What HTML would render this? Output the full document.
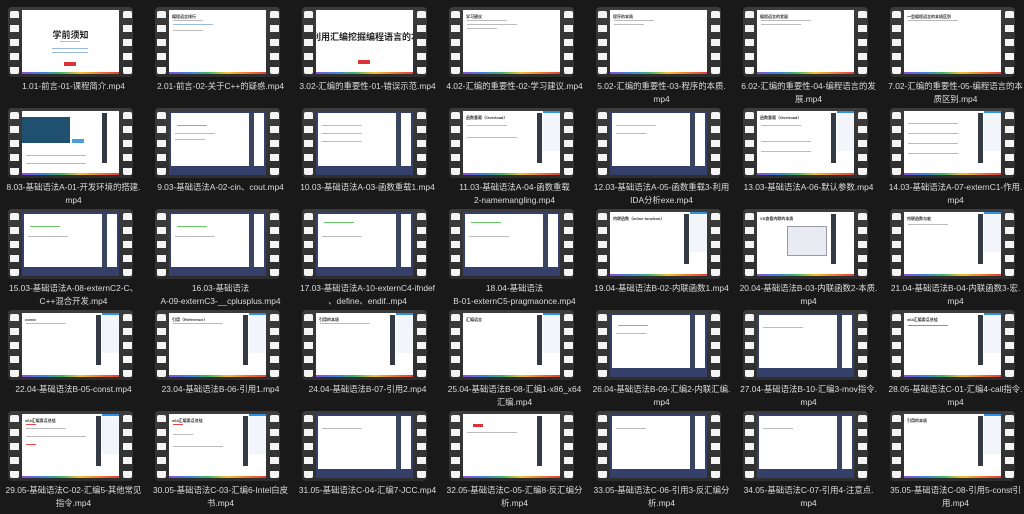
<!DOCTYPE html>
<html><head><meta charset="utf-8"><style>
*{margin:0;padding:0;box-sizing:border-box}
body{width:1024px;height:514px;background:#191919;overflow:hidden;position:relative;font-family:"Liberation Sans","Noto Sans CJK SC",sans-serif}
.c{position:absolute;width:147px;height:101px}
.f{position:absolute;left:8px;top:7px;width:125px;height:70px;border-radius:4px;background:linear-gradient(#3c3c3c,#2e2e2e)}
.h{position:absolute;top:4px;width:9px;height:63px;background:repeating-linear-gradient(#f4f4f4 0 7px,transparent 7px 14px);border-radius:2px}
.h.l{left:2px}.h.r{left:115px}
.s{position:absolute;left:14px;top:3px;width:97px;height:64px;background:#fff;overflow:hidden}
.s:after{content:"";position:absolute;left:0;right:0;bottom:0;height:2px;background:linear-gradient(90deg,#8a4fd8,#3f7fe0,#3cb46e,#f0c030,#f07a30,#e04040)}
.sb{position:absolute;left:76%;top:2px;width:5px;height:50px;background:#333a44}
.sp{position:absolute;left:82%;top:0;right:0;height:40px;background:#f2f6fa;border-top:2px solid #2f8fe0}
.vs{background:#fff;border:2px solid #34406a;border-bottom-width:9px}
.vs .sb{left:84%;background:#3a4560;height:60px;top:0}
.vs:after{display:none}
.t{position:absolute;left:3px;top:4px;font-size:4px;color:#333;font-weight:bold}
.ln{position:absolute;left:4px;height:1px;background:#bbb}
.g{position:absolute;left:6px;height:1px;background:#6c6}
.lb{position:absolute;left:-20px;top:80px;width:187px;text-align:center;font-size:8.4px;line-height:13px;color:#dcdcdc;white-space:nowrap}
</style></head><body>
<!-- Row 1 -->
<div class="c" style="left:0;top:0"><div class="f"><div class="h l"></div><div class="h r"></div><div class="s"><div style="position:absolute;top:18px;width:100%;text-align:center;font-size:9px;font-weight:bold;color:#222">学前须知</div><div class="ln" style="left:38px;top:31px;width:20px"></div><div class="ln" style="left:30px;top:38px;width:36px;background:#9bd"></div><div class="ln" style="left:30px;top:42px;width:36px;background:#9bd"></div><div style="position:absolute;left:42px;top:52px;width:12px;height:4px;background:#d33"></div></div></div><div class="lb">1.01-前言-01-课程简介.mp4</div></div>
<div class="c" style="left:147px;top:0"><div class="f"><div class="h l"></div><div class="h r"></div><div class="s"><div class="t">编程语言排行</div><div class="ln" style="top:10px;width:30px"></div><div class="ln" style="top:14px;width:40px;background:#9bd"></div><div class="ln" style="top:20px;width:30px"></div></div></div><div class="lb">2.01-前言-02-关于C++的疑惑.mp4</div></div>
<div class="c" style="left:294px;top:0"><div class="f"><div class="h l"></div><div class="h r"></div><div class="s"><div style="position:absolute;top:20px;left:-4px;width:110px;text-align:center;font-size:9px;font-weight:bold;color:#222;white-space:nowrap">利用汇编挖掘编程语言的本质</div><div style="position:absolute;left:42px;top:50px;width:12px;height:4px;background:#d33"></div></div></div><div class="lb">3.02-汇编的重要性-01-错误示范.mp4</div></div>
<div class="c" style="left:441px;top:0"><div class="f"><div class="h l"></div><div class="h r"></div><div class="s"><div class="t">学习建议</div><div class="ln" style="top:10px;width:40px"></div><div class="ln" style="top:14px;width:50px"></div><div class="ln" style="top:18px;width:30px"></div></div></div><div class="lb">4.02-汇编的重要性-02-学习建议.mp4</div></div>
<div class="c" style="left:588px;top:0"><div class="f"><div class="h l"></div><div class="h r"></div><div class="s"><div class="t">程序的本质</div><div class="ln" style="top:10px;width:40px"></div><div class="ln" style="top:14px;width:30px"></div></div></div><div class="lb">5.02-汇编的重要性-03-程序的本质.<br>mp4</div></div>
<div class="c" style="left:735px;top:0"><div class="f"><div class="h l"></div><div class="h r"></div><div class="s"><div class="t">编程语言的发展</div><div class="ln" style="top:10px;width:50px"></div><div class="ln" style="top:14px;width:40px"></div></div></div><div class="lb">6.02-汇编的重要性-04-编程语言的发<br>展.mp4</div></div>
<div class="c" style="left:882px;top:0"><div class="f"><div class="h l"></div><div class="h r"></div><div class="s"><div class="t">一些编程语言的本质区别</div><div class="ln" style="top:10px;width:50px"></div></div></div><div class="lb">7.02-汇编的重要性-05-编程语言的本<br>质区别.mp4</div></div>
<!-- Row 2 -->
<div class="c" style="left:0;top:101px"><div class="f"><div class="h l"></div><div class="h r"></div><div class="s"><div style="position:absolute;left:0;top:6px;width:48px;height:26px;background:#1f5070"></div><div style="position:absolute;left:50px;top:28px;width:12px;height:4px;background:#4a9ee0"></div><div class="sb" style="left:82%"></div><div class="ln" style="top:44px;width:60px"></div><div class="ln" style="top:52px;width:60px"></div></div></div><div class="lb">8.03-基础语法A-01-开发环境的搭建.<br>mp4</div></div>
<div class="c" style="left:147px;top:101px"><div class="f"><div class="h l"></div><div class="h r"></div><div class="s vs"><div class="sb"></div><div class="g" style="top:12px;width:30px"></div><div class="ln" style="top:20px;width:40px"></div><div class="ln" style="top:26px;width:30px"></div></div></div><div class="lb">9.03-基础语法A-02-cin、cout.mp4</div></div>
<div class="c" style="left:294px;top:101px"><div class="f"><div class="h l"></div><div class="h r"></div><div class="s vs"><div class="sb"></div><div class="ln" style="top:12px;width:40px"></div><div class="ln" style="top:20px;width:40px"></div><div class="ln" style="top:28px;width:40px"></div></div></div><div class="lb">10.03-基础语法A-03-函数重载1.mp4</div></div>
<div class="c" style="left:441px;top:101px"><div class="f"><div class="h l"></div><div class="h r"></div><div class="s"><div class="t">函数重载（Overload）</div><div class="sb"></div><div class="sp"></div><div class="ln" style="top:14px;width:40px"></div><div class="ln" style="top:26px;width:50px"></div></div></div><div class="lb">11.03-基础语法A-04-函数重载<br>2-namemangling.mp4</div></div>
<div class="c" style="left:588px;top:101px"><div class="f"><div class="h l"></div><div class="h r"></div><div class="s vs"><div class="sb"></div><div class="ln" style="top:12px;width:40px"></div><div class="ln" style="top:20px;width:30px"></div></div></div><div class="lb">12.03-基础语法A-05-函数重载3-利用<br>IDA分析exe.mp4</div></div>
<div class="c" style="left:735px;top:101px"><div class="f"><div class="h l"></div><div class="h r"></div><div class="s"><div class="t">函数重载（Overload）</div><div class="sb"></div><div class="sp"></div><div class="ln" style="top:14px;width:40px"></div><div class="ln" style="top:30px;width:50px"></div><div class="ln" style="top:40px;width:50px"></div></div></div><div class="lb">13.03-基础语法A-06-默认参数.mp4</div></div>
<div class="c" style="left:882px;top:101px"><div class="f"><div class="h l"></div><div class="h r"></div><div class="s"><div class="sb"></div><div class="sp"></div><div class="ln" style="top:12px;width:50px"></div><div class="ln" style="top:22px;width:50px"></div><div class="ln" style="top:32px;width:50px"></div><div class="ln" style="top:42px;width:50px"></div></div></div><div class="lb">14.03-基础语法A-07-externC1-作用.<br>mp4</div></div>
<!-- Row 3 -->
<div class="c" style="left:0;top:202px"><div class="f"><div class="h l"></div><div class="h r"></div><div class="s vs"><div class="sb"></div><div class="g" style="top:12px;width:30px"></div><div class="ln" style="top:22px;width:40px"></div></div></div><div class="lb">15.03-基础语法A-08-externC2-C、<br>C++混合开发.mp4</div></div>
<div class="c" style="left:147px;top:202px"><div class="f"><div class="h l"></div><div class="h r"></div><div class="s vs"><div class="sb"></div><div class="g" style="top:12px;width:30px"></div><div class="ln" style="top:22px;width:40px"></div></div></div><div class="lb">16.03-基础语法<br>A-09-externC3-__cplusplus.mp4</div></div>
<div class="c" style="left:294px;top:202px"><div class="f"><div class="h l"></div><div class="h r"></div><div class="s vs"><div class="sb"></div><div class="g" style="top:8px;width:30px"></div><div class="ln" style="top:22px;width:40px"></div></div></div><div class="lb">17.03-基础语法A-10-externC4-ifndef<br>、define、endif..mp4</div></div>
<div class="c" style="left:441px;top:202px"><div class="f"><div class="h l"></div><div class="h r"></div><div class="s vs"><div class="sb"></div><div class="g" style="top:8px;width:30px"></div><div class="ln" style="top:22px;width:40px"></div></div></div><div class="lb">18.04-基础语法<br>B-01-externC5-pragmaonce.mp4</div></div>
<div class="c" style="left:588px;top:202px"><div class="f"><div class="h l"></div><div class="h r"></div><div class="s"><div class="t">内联函数（inline function）</div><div class="sb"></div><div class="sp"></div></div></div><div class="lb">19.04-基础语法B-02-内联函数1.mp4</div></div>
<div class="c" style="left:735px;top:202px"><div class="f"><div class="h l"></div><div class="h r"></div><div class="s"><div class="t">VS查看内联的本质</div><div style="position:absolute;left:30px;top:14px;width:40px;height:30px;background:#e8ecf2;border:1px solid #99a"></div><div class="sb"></div></div></div><div class="lb">20.04-基础语法B-03-内联函数2-本质.<br>mp4</div></div>
<div class="c" style="left:882px;top:202px"><div class="f"><div class="h l"></div><div class="h r"></div><div class="s"><div class="t">内联函数与宏</div><div class="sb"></div><div class="sp"></div><div class="ln" style="top:12px;width:40px"></div></div></div><div class="lb">21.04-基础语法B-04-内联函数3-宏.<br>mp4</div></div>
<!-- Row 4 -->
<div class="c" style="left:0;top:303px"><div class="f"><div class="h l"></div><div class="h r"></div><div class="s"><div class="t">const</div><div class="sb"></div><div class="sp"></div><div class="ln" style="top:10px;width:40px"></div></div></div><div class="lb">22.04-基础语法B-05-const.mp4</div></div>
<div class="c" style="left:147px;top:303px"><div class="f"><div class="h l"></div><div class="h r"></div><div class="s"><div class="t">引用（Reference）</div><div class="sb"></div><div class="sp"></div><div class="ln" style="top:10px;width:50px"></div></div></div><div class="lb">23.04-基础语法B-06-引用1.mp4</div></div>
<div class="c" style="left:294px;top:303px"><div class="f"><div class="h l"></div><div class="h r"></div><div class="s"><div class="t">引用的本质</div><div class="sb"></div><div class="sp"></div><div class="ln" style="top:10px;width:50px"></div></div></div><div class="lb">24.04-基础语法B-07-引用2.mp4</div></div>
<div class="c" style="left:441px;top:303px"><div class="f"><div class="h l"></div><div class="h r"></div><div class="s"><div class="t">汇编语言</div><div class="sb"></div><div class="sp"></div></div></div><div class="lb">25.04-基础语法B-08-汇编1-x86_x64<br>汇编.mp4</div></div>
<div class="c" style="left:588px;top:303px"><div class="f"><div class="h l"></div><div class="h r"></div><div class="s vs"><div class="sb"></div><div class="g" style="top:10px;width:30px"></div><div class="ln" style="top:18px;width:30px"></div></div></div><div class="lb">26.04-基础语法B-09-汇编2-内联汇编.<br>mp4</div></div>
<div class="c" style="left:735px;top:303px"><div class="f"><div class="h l"></div><div class="h r"></div><div class="s vs"><div class="sb"></div><div class="ln" style="top:12px;width:40px"></div></div></div><div class="lb">27.04-基础语法B-10-汇编3-mov指令.<br>mp4</div></div>
<div class="c" style="left:882px;top:303px"><div class="f"><div class="h l"></div><div class="h r"></div><div class="s"><div class="t">x64汇编要点总结</div><div class="sb"></div><div class="sp"></div><div class="ln" style="top:12px;width:40px;background:#e66"></div></div></div><div class="lb">28.05-基础语法C-01-汇编4-call指令.<br>mp4</div></div>
<!-- Row 5 -->
<div class="c" style="left:0;top:404px"><div class="f"><div class="h l"></div><div class="h r"></div><div class="s"><div class="t">x64汇编要点总结</div><div class="sb"></div><div class="sp"></div><div class="ln" style="top:10px;width:10px;background:#e44"></div><div class="ln" style="top:14px;width:40px"></div><div class="ln" style="top:22px;width:60px"></div><div class="ln" style="top:30px;width:10px;background:#e44"></div></div></div><div class="lb">29.05-基础语法C-02-汇编5-其他常见<br>指令.mp4</div></div>
<div class="c" style="left:147px;top:404px"><div class="f"><div class="h l"></div><div class="h r"></div><div class="s"><div class="t">x64汇编要点总结</div><div class="sb"></div><div class="sp"></div><div class="ln" style="top:10px;width:10px;background:#e44"></div><div class="ln" style="top:20px;width:20px"></div><div class="ln" style="top:32px;width:50px"></div></div></div><div class="lb">30.05-基础语法C-03-汇编6-Intel白皮<br>书.mp4</div></div>
<div class="c" style="left:294px;top:404px"><div class="f"><div class="h l"></div><div class="h r"></div><div class="s vs"><div class="sb"></div><div class="ln" style="top:12px;width:40px"></div></div></div><div class="lb">31.05-基础语法C-04-汇编7-JCC.mp4</div></div>
<div class="c" style="left:441px;top:404px"><div class="f"><div class="h l"></div><div class="h r"></div><div class="s"><div style="position:absolute;left:10px;top:10px;width:10px;height:3px;background:#d33"></div><div class="sb"></div><div class="ln" style="top:18px;width:50px"></div></div></div><div class="lb">32.05-基础语法C-05-汇编8-反汇编分<br>析.mp4</div></div>
<div class="c" style="left:588px;top:404px"><div class="f"><div class="h l"></div><div class="h r"></div><div class="s vs"><div class="sb"></div><div class="ln" style="top:12px;width:30px"></div></div></div><div class="lb">33.05-基础语法C-06-引用3-反汇编分<br>析.mp4</div></div>
<div class="c" style="left:735px;top:404px"><div class="f"><div class="h l"></div><div class="h r"></div><div class="s vs"><div class="sb"></div><div class="ln" style="top:12px;width:30px"></div></div></div><div class="lb">34.05-基础语法C-07-引用4-注意点.<br>mp4</div></div>
<div class="c" style="left:882px;top:404px"><div class="f"><div class="h l"></div><div class="h r"></div><div class="s"><div class="t">引用的本质</div><div class="sb"></div><div class="sp"></div></div></div><div class="lb">35.05-基础语法C-08-引用5-const引<br>用.mp4</div></div>
</body></html>
